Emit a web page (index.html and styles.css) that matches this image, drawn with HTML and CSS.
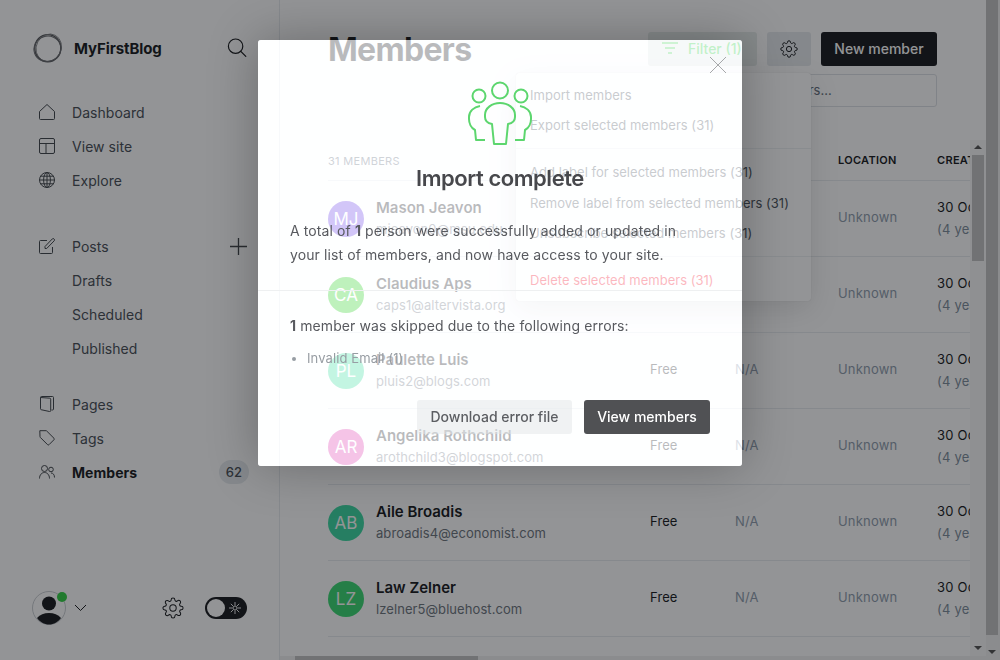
FILE: index.html
```html
<!DOCTYPE html>
<html lang="en">
<head>
    <meta charset="UTF-8">
    <meta name="viewport" content="width=device-width, initial-scale=1.0">
    <title>Members - MyFirstBlog</title>
    <link rel="stylesheet" href="styles.css">
</head>
<body>

    <div class="app">
        <!-- Sidebar -->
        <aside class="sidebar">
            <div class="brand">
                <svg class="logo" width="32" height="32" viewBox="0 0 32 32" fill="none">
                    <ellipse cx="15.800" cy="16.200" rx="13" ry="13.600" stroke="#505256" stroke-width="1.400"/>
                    <ellipse cx="16.500" cy="15.400" rx="12.400" ry="14" stroke="#76787b" stroke-width=".8" transform="rotate(28 16 16)"/>
                    <ellipse cx="15.200" cy="16.600" rx="13.600" ry="12.600" stroke="#66686c" stroke-width="1" transform="rotate(-20 16 16)"/>
                </svg>
                <span class="brand-name">MyFirstBlog</span>
                <svg class="brand-search" width="20" height="20" viewBox="0 0 20 20" fill="none" stroke="#15171a" stroke-width="1.200" stroke-linecap="round">
                    <circle cx="8.600" cy="8.200" r="7.200"/>
                    <path d="M13.800 13.400l5 5"/>
                </svg>
            </div>

            <nav class="nav">
                <a class="nav-item">
                    <svg class="nav-icon" viewBox="0 0 16 16"><path d="M.5 7.500L8 .5l7.500 7v7a1 1 0 0 1-1 1h-13a1 1 0 0 1-1-1z"/></svg>
                    Dashboard
                </a>
                <a class="nav-item">
                    <svg class="nav-icon" viewBox="0 0 16 16"><rect x=".5" y=".5" width="15" height="15" rx="1.500"/><path d="M.5 5.500h15M7 5.500v10"/></svg>
                    View site
                </a>
                <a class="nav-item">
                    <svg class="nav-icon" viewBox="0 0 16 16"><circle cx="8" cy="8" r="7.500"/><ellipse cx="8" cy="8" rx="3.400" ry="7.500"/><path d="M8 .5v15M.5 8h15M1.600 4.200h12.800M1.600 11.800h12.800"/></svg>
                    Explore
                </a>
            </nav>

            <nav class="nav nav-posts">
                <a class="nav-item">
                    <svg class="nav-icon" viewBox="0 0 16 16"><path d="M8 2.500H1.500a1 1 0 0 0-1 1v11a1 1 0 0 0 1 1h11a1 1 0 0 0 1-1V9"/><path d="M6 8.500L13.300.9a1.200 1.200 0 0 1 1.700 0l.2.2a1.200 1.200 0 0 1 0 1.700L7.700 10.500H6z"/></svg>
                    Posts
                    <svg class="nav-plus" width="17" height="17" viewBox="0 0 17 17" fill="none" stroke="#3f4346" stroke-width="1.300"><path d="M8.500 0v17M0 8.500h17"/></svg>
                </a>
                <a class="nav-item nav-sub">Drafts</a>
                <a class="nav-item nav-sub">Scheduled</a>
                <a class="nav-item nav-sub">Published</a>
            </nav>

            <nav class="nav">
                <a class="nav-item">
                    <svg class="nav-icon" viewBox="0 0 16 16"><path d="M1.500 1.500a1 1 0 0 1 1-1h11a1 1 0 0 1 1 1v11.500a1 1 0 0 1-1 1h-1"/><path d="M1.500 1.500v11.300a1 1 0 0 0 .6.9l8.400 1.800a1 1 0 0 0 1.200-1V3.200a1 1 0 0 0-.8-1z"/></svg>
                    Pages
                </a>
                <a class="nav-item">
                    <svg class="nav-icon" viewBox="0 0 16 16"><path d="M.8.7h6.200a1 1 0 0 1 .7.3l7.300 7.300a1 1 0 0 1 0 1.400l-5 5a1 1 0 0 1-1.400 0L1.300 7.400a1 1 0 0 1-.3-.7z"/></svg>
                    Tags
                </a>
                <a class="nav-item is-active">
                    <svg class="nav-icon" viewBox="0 0 16 16"><circle cx="5.500" cy="4.500" r="3"/><path d="M.5 14.500c0-3.500 2.200-6 5-6s5 2.500 5 6"/><circle cx="12" cy="5.500" r="2.300"/><path d="M12 9c2 0 3.500 1.600 3.500 4.500"/></svg>
                    Members
                    <span class="nav-badge">62</span>
                </a>
            </nav>

            <div class="sidebar-footer">
                <div class="user">
                    <svg class="user-avatar" width="34" height="34" viewBox="0 0 34 34">
                        <circle cx="17" cy="17" r="16.500" fill="none" stroke="#c8ccd0"/>
                        <circle cx="17" cy="12.500" r="7" fill="#15171a"/>
                        <path d="M5 27c3-3.500 7-5 12-5s9 1.500 12 5c-3 4-7 6.500-12 6.500S8 31 5 27z" fill="#15171a"/>
                    </svg>
                    <span class="user-dot"></span>
                </div>
                <svg class="user-caret" width="13" height="8" viewBox="0 0 13 8" fill="none" stroke="#15171a"><path d="M1 1l5.500 5.500L12 1"/></svg>
                <svg class="footer-gear" width="22" height="22" viewBox="0 0 24 24" fill="none" stroke="#15171a" stroke-width="1.100">
                    <circle cx="12" cy="12" r="3.500"/>
                    <path d="M19.400 15a1.650 1.650 0 0 0 .33 1.820l.06.06a2 2 0 0 1 0 2.830 2 2 0 0 1-2.830 0l-.06-.06a1.650 1.650 0 0 0-1.820-.33 1.650 1.650 0 0 0-1 1.510V21a2 2 0 0 1-2 2 2 2 0 0 1-2-2v-.09A1.650 1.650 0 0 0 9 19.400a1.650 1.650 0 0 0-1.820.33l-.06.06a2 2 0 0 1-2.830 0 2 2 0 0 1 0-2.830l.06-.06a1.650 1.650 0 0 0 .33-1.820 1.650 1.650 0 0 0-1.510-1H3a2 2 0 0 1-2-2 2 2 0 0 1 2-2h.09A1.650 1.650 0 0 0 4.600 9a1.650 1.650 0 0 0-.33-1.820l-.06-.06a2 2 0 0 1 0-2.830 2 2 0 0 1 2.830 0l.06.06a1.650 1.650 0 0 0 1.820.33H9a1.650 1.650 0 0 0 1-1.510V3a2 2 0 0 1 2-2 2 2 0 0 1 2 2v.09a1.650 1.650 0 0 0 1 1.510 1.650 1.650 0 0 0 1.820-.33l.06-.06a2 2 0 0 1 2.830 0 2 2 0 0 1 0 2.830l-.06.06a1.650 1.650 0 0 0-.33 1.820V9a1.650 1.650 0 0 0 1.510 1H21a2 2 0 0 1 2 2 2 2 0 0 1-2 2h-.09a1.650 1.650 0 0 0-1.510 1z"/>
                </svg>
                <div class="theme-toggle">
                    <span class="theme-knob"></span>
                    <svg width="12" height="12" viewBox="0 0 12 12" fill="none" stroke="#e8e8e8"><circle cx="6" cy="6" r="2"/><path d="M6 0v3.500M6 8.500V12M0 6h3.500M8.500 6H12M1.800 1.800l2.500 2.500M7.700 7.700l2.500 2.500M10.200 1.800L7.700 4.300M4.300 7.700l-2.500 2.500"/></svg>
                </div>
            </div>
        </aside>

        <!-- Members page -->
        <main class="main">
            <header class="topbar">
                <h1 class="page-title">Members</h1>
                <div class="actions">
                    <button class="btn btn-filter">
                        <svg width="16" height="12" viewBox="0 0 16 12" fill="none" stroke="#30cf43" stroke-width="1.500"><path d="M0 1h16M3 6h10M6 11h4"/></svg>
                        Filter (1)
                    </button>
                    <button class="btn btn-gear">
                        <svg width="18" height="18" viewBox="0 0 24 24" fill="none" stroke="#15171a" stroke-width="1.300">
                            <circle cx="12" cy="12" r="3.500"/>
                            <path d="M19.400 15a1.650 1.650 0 0 0 .33 1.820l.06.06a2 2 0 0 1 0 2.830 2 2 0 0 1-2.830 0l-.06-.06a1.650 1.650 0 0 0-1.820-.33 1.650 1.650 0 0 0-1 1.510V21a2 2 0 0 1-2 2 2 2 0 0 1-2-2v-.09A1.650 1.650 0 0 0 9 19.400a1.650 1.650 0 0 0-1.820.33l-.06.06a2 2 0 0 1-2.830 0 2 2 0 0 1 0-2.830l.06-.06a1.650 1.650 0 0 0 .33-1.820 1.650 1.650 0 0 0-1.510-1H3a2 2 0 0 1-2-2 2 2 0 0 1 2-2h.09A1.650 1.650 0 0 0 4.600 9a1.650 1.650 0 0 0-.33-1.820l-.06-.06a2 2 0 0 1 0-2.830 2 2 0 0 1 2.830 0l.06.06a1.650 1.650 0 0 0 1.820.33H9a1.650 1.650 0 0 0 1-1.510V3a2 2 0 0 1 2-2 2 2 0 0 1 2 2v.09a1.650 1.650 0 0 0 1 1.510 1.650 1.650 0 0 0 1.820-.33l.06-.06a2 2 0 0 1 2.830 0 2 2 0 0 1 0 2.830l-.06.06a1.650 1.650 0 0 0-.33 1.820V9a1.650 1.650 0 0 0 1.510 1H21a2 2 0 0 1 2 2 2 2 0 0 1-2 2h-.09a1.650 1.650 0 0 0-1.510 1z"/>
                        </svg>
                    </button>
                    <button class="btn btn-new">New member</button>
                </div>
            </header>

            <div class="search-row">
                <div class="search-box">Search members...</div>
            </div>

            <!-- Actions dropdown, open over the page -->
            <div class="menu">
                <a class="menu-item">Import members</a>
                <a class="menu-item">Export selected members (31)</a>
                <hr class="menu-line">
                <a class="menu-item menu-item-tall">Add label for selected members (31)</a>
                <a class="menu-item">Remove label from selected members (31)</a>
                <a class="menu-item">Unsubscribe selected members (31)</a>
                <hr class="menu-line">
                <a class="menu-item menu-danger">Delete selected members (31)</a>
            </div>

            <div class="table-area">
                <div class="table">
                    <div class="row row-head">
                        <span class="head-count">31 members</span>
                        <span></span>
                        <span></span>
                        <span class="head-strong">Location</span>
                        <span class="head-strong">Created</span>
                    </div>

                    <div class="row">
                        <div class="member">
                            <span class="avatar avatar-mj">MJ</span>
                            <div><div class="member-name">Mason Jeavon</div><div class="member-email">mjeavon0@msu.edu</div></div>
                        </div>
                        <span class="cell-plan">Free</span>
                        <span class="cell-muted">N/A</span>
                        <span class="cell-muted">Unknown</span>
                        <div class="cell-date">30 Oct 2018<br><span>(4 years ago)</span></div>
                    </div>
                    <div class="row">
                        <div class="member">
                            <span class="avatar avatar-ca">CA</span>
                            <div><div class="member-name">Claudius Aps</div><div class="member-email">caps1@altervista.org</div></div>
                        </div>
                        <span class="cell-plan">Free</span>
                        <span class="cell-muted">N/A</span>
                        <span class="cell-muted">Unknown</span>
                        <div class="cell-date">30 Oct 2018<br><span>(4 years ago)</span></div>
                    </div>
                    <div class="row">
                        <div class="member">
                            <span class="avatar avatar-pl">PL</span>
                            <div><div class="member-name">Paulette Luis</div><div class="member-email">pluis2@blogs.com</div></div>
                        </div>
                        <span class="cell-plan">Free</span>
                        <span class="cell-muted">N/A</span>
                        <span class="cell-muted">Unknown</span>
                        <div class="cell-date">30 Oct 2018<br><span>(4 years ago)</span></div>
                    </div>
                    <div class="row">
                        <div class="member">
                            <span class="avatar avatar-ar">AR</span>
                            <div><div class="member-name">Angelika Rothchild</div><div class="member-email">arothchild3@blogspot.com</div></div>
                        </div>
                        <span class="cell-plan">Free</span>
                        <span class="cell-muted">N/A</span>
                        <span class="cell-muted">Unknown</span>
                        <div class="cell-date">30 Oct 2018<br><span>(4 years ago)</span></div>
                    </div>
                    <div class="row">
                        <div class="member">
                            <span class="avatar avatar-ab">AB</span>
                            <div><div class="member-name">Aile Broadis</div><div class="member-email">abroadis4@economist.com</div></div>
                        </div>
                        <span class="cell-plan">Free</span>
                        <span class="cell-muted">N/A</span>
                        <span class="cell-muted">Unknown</span>
                        <div class="cell-date">30 Oct 2018<br><span>(4 years ago)</span></div>
                    </div>
                    <div class="row">
                        <div class="member">
                            <span class="avatar avatar-lz">LZ</span>
                            <div><div class="member-name">Law Zelner</div><div class="member-email">lzelner5@bluehost.com</div></div>
                        </div>
                        <span class="cell-plan">Free</span>
                        <span class="cell-muted">N/A</span>
                        <span class="cell-muted">Unknown</span>
                        <div class="cell-date">30 Oct 2018<br><span>(4 years ago)</span></div>
                    </div>
                </div>

                <div class="vbar">
                    <span class="arrow-up"></span>
                    <span class="vbar-thumb"></span>
                    <span class="arrow-down"></span>
                </div>
            </div>

            <div class="hbar"><span class="hbar-thumb"></span></div>
        </main>

        <div class="page-bar">
            <span class="page-bar-thumb"></span>
            <span class="arrow-down"></span>
        </div>
    </div>

    <!-- Import modal -->
    <div class="backdrop"></div>
    <div class="modal">
        <svg class="modal-close" width="16" height="16" viewBox="0 0 16 16" fill="none" stroke="#a6a8aa"><path d="M0 0l16 16M16 0L0 16"/></svg>

        <svg class="modal-icon" width="64" height="64" viewBox="0 0 64 64" fill="none" stroke="#5cd66e" stroke-width="2" stroke-linejoin="round">
            <circle cx="32" cy="9.500" r="8"/>
            <circle cx="11" cy="15" r="6.500"/>
            <circle cx="53" cy="15" r="6.500"/>
            <path d="M26 63L24 43C19 42 17 39 17 36V34C17 27 24 22 32 22S47 27 47 34V36C47 39 45 42 40 43L38 63Z"/>
            <path d="M12 25C6 26 1 30 1 36V38C1 42 3 47 7 49L8 59H17"/>
            <path d="M52 25C58 26 63 30 63 36V38C63 42 61 47 57 49L56 59H47"/>
        </svg>
        <h2 class="modal-title">Import complete</h2>
        <p class="modal-text">A total of <b>1</b> person were successfully added or updated in your list of members, and now have access to your site.</p>
        <hr class="modal-line">
        <p class="modal-errors"><b>1</b> member was skipped due to the following errors:</p>
        <ul class="modal-list">
            <li>Invalid Email (1)</li>
        </ul>
        <div class="modal-actions">
            <button class="btn btn-download">Download error file</button>
            <button class="btn btn-view">View members</button>
        </div>
    </div>

</body>
</html>
```

FILE: styles.css
```css
* {
    box-sizing: border-box;
}

html, body {
    margin: 0;
    padding: 0;
    height: 660px;
    overflow: hidden;
}

body {
    font-family: Inter, 'Noto Sans', sans-serif;
    font-size: 14px;
    color: #15171a;
    background-color: #fff;
}

.app {
    display: flex;
    height: 660px;
}

/* Sidebar */
.sidebar {
    width: 280px;
    flex: none;
    padding: 32px 32px 0;
    border-right: 1px solid #e8ecef;
    display: flex;
    flex-direction: column;
}

.brand {
    display: flex;
    align-items: center;
    height: 32px;
    margin-bottom: 31px;
}

.brand-name {
    margin-left: 10px;
    font-size: 15px;
    font-weight: 700;
    letter-spacing: -0.1px;
}

.brand-search {
    margin-left: auto;
    margin-right: 0;
}

.nav {
    display: flex;
    flex-direction: column;
    margin-bottom: 22px;
}

.nav:first-of-type {
    margin-bottom: 32px;
}

.nav-item {
    display: flex;
    align-items: center;
    height: 34px;
    padding-left: 7px;
    color: #454c53;
    font-size: 14px;
    letter-spacing: 0.05px;
}

.nav-icon {
    width: 16px;
    height: 16px;
    margin-right: 17px;
    fill: none;
    stroke: #3f4449;
    stroke-width: 1;
    stroke-linejoin: round;
}

.nav-sub {
    padding-left: 40px;
}

.nav-plus {
    margin-left: auto;
}

.is-active {
    color: #15171a;
    font-weight: 700;
}

.nav-badge {
    margin-left: auto;
    margin-right: -2px;
    width: 30px;
    height: 24px;
    line-height: 24px;
    border-radius: 12px;
    text-align: center;
    font-size: 13px;
    font-weight: 500;
    color: #454c53;
    background-color: #e5eaed;
}

.sidebar-footer {
    display: flex;
    align-items: center;
    margin-top: auto;
    margin-bottom: 35px;
}

.user {
    position: relative;
    width: 34px;
    height: 34px;
}

.user-avatar {
    display: block;
}

.user-dot {
    position: absolute;
    top: 1px;
    right: -1px;
    width: 10px;
    height: 10px;
    border-radius: 50%;
    background-color: #30cf43;
}

.user-caret {
    margin-left: 8px;
}

.footer-gear {
    margin-left: 75px;
}

.theme-toggle {
    display: flex;
    align-items: center;
    justify-content: space-between;
    width: 42px;
    height: 22px;
    margin-left: 21px;
    padding: 0 6px 0 2px;
    border-radius: 11px;
    background-color: #15171a;
}

.theme-knob {
    width: 18px;
    height: 18px;
    border-radius: 50%;
    background-color: #fff;
}

/* Main */
.main {
    position: relative;
    flex: 1;
    min-width: 0;
    padding: 32px 0 0 48px;
}

.topbar {
    display: flex;
    align-items: center;
    justify-content: space-between;
    height: 34px;
    padding-right: 49px;
}

.page-title {
    margin: 0;
    font-size: 32px;
    font-weight: 700;
    letter-spacing: -0.7px;
}

.actions {
    display: flex;
    gap: 10px;
}

.btn {
    height: 34px;
    padding-bottom: 2px;
    border: none;
    border-radius: 3px;
    font-family: inherit;
    font-size: 14px;
    font-weight: 450;
    cursor: pointer;
}

.btn-filter {
    display: flex;
    align-items: center;
    gap: 10px;
    width: 109px;
    padding: 0 14px 2px;
    color: #30cf43;
    background-color: #e6ecea;
}

.btn-gear {
    width: 44px;
    padding: 0;
    background-color: #e6eaed;
}

.btn-gear svg {
    display: block;
    margin: 0 auto;
}

.btn-new {
    width: 116px;
    padding: 0 0 2px;
    color: #fff;
    background-color: #15171a;
}

.search-row {
    display: flex;
    justify-content: flex-end;
    margin-top: 8px;
    padding-right: 49px;
}

.search-box {
    width: 237px;
    height: 33px;
    padding-left: 15px;
    line-height: 31px;
    font-size: 13px;
    color: #626d79;
    border: 1px solid #dde1e5;
    border-radius: 3px;
}

.menu {
    position: absolute;
    top: 73px;
    left: 236px;
    width: 295px;
    height: 228px;
    padding-top: 7px;
    background-color: #fff;
    border-radius: 3px;
    box-shadow: 0 0 1px rgba(0, 0, 0, 0.2), 0 8px 30px rgba(0, 0, 0, 0.12);
}

.menu-item {
    display: block;
    height: 30px;
    line-height: 30px;
    padding-left: 14px;
    font-size: 13px;
    letter-spacing: 0.02px;
    color: #4a5259;
    white-space: nowrap;
}

.menu-item-tall {
    height: 31px;
}

.menu-danger {
    color: #f50b23;
}

.menu-line {
    height: 1px;
    margin: 8px 0 8px;
    border: none;
    background-color: #edf0f2;
}

.table-area {
    display: flex;
    height: 516px;
    margin-top: 33px;
}

.table {
    width: 642px;
    overflow: hidden;
}

.row {
    display: grid;
    grid-template-columns: 322px 85px 103px 99px 140px;
    align-items: center;
    height: 76px;
    border-bottom: 1px solid #e8ecef;
    font-size: 13px;
    white-space: nowrap;
}

.row-head {
    height: 41px;
    font-size: 11px;
    letter-spacing: 0.3px;
    text-transform: uppercase;
}

.head-count {
    padding-top: 1px;
    color: #626d79;
}

.head-strong {
    font-weight: 600;
    color: #15171a;
}

.member {
    display: flex;
    align-items: center;
    gap: 12px;
}

.avatar {
    width: 36px;
    height: 36px;
    line-height: 36px;
    border-radius: 50%;
    text-align: center;
    font-size: 17px;
    color: #fff;
}

.avatar-mj { background-color: #6a3fe6; }
.avatar-ca { background-color: #25d01b; }
.avatar-pl { background-color: #38de99; }
.avatar-ar { background-color: #de38ab; }
.avatar-ab { background-color: #3ad8a0; }
.avatar-lz { background-color: #38d870; }

.member-name {
    font-size: 15px;
    font-weight: 600;
    line-height: 22px;
}

.member-email {
    margin-top: -1px;
    font-size: 13px;
    line-height: 22px;
    letter-spacing: 0.07px;
    color: #6b737b;
}

.cell-plan {
    padding-bottom: 3px;
    letter-spacing: 0.1px;
}

.cell-muted {
    padding-bottom: 3px;
    letter-spacing: 0.2px;
    color: #8e9cac;
}

.cell-date {
    padding-bottom: 1px;
    line-height: 22px;
    letter-spacing: 0.2px;
}

.cell-date span {
    color: #7c8b9a;
}

/* Scrollbars */
.vbar {
    position: relative;
    width: 16px;
    height: 516px;
    background-color: #f7f7f7;
}

.vbar-thumb {
    display: block;
    width: 12px;
    height: 106px;
    margin: 15px 0 0 2px;
    background-color: #c1c1c1;
}

.arrow-up, .arrow-down {
    position: absolute;
    left: 4px;
    width: 0;
    height: 0;
    border-left: 4px solid transparent;
    border-right: 4px solid transparent;
}

.arrow-up {
    top: 5px;
    border-bottom: 4px solid #505050;
}

.arrow-down {
    bottom: 6px;
    border-top: 4px solid #505050;
}

.hbar {
    height: 4px;
    margin-left: -48px;
    padding-left: 15px;
    background-color: #f1f1f1;
}

.hbar-thumb {
    display: block;
    width: 183px;
    height: 4px;
    background-color: #c1c1c1;
}

.page-bar {
    position: relative;
    width: 14px;
    flex: none;
    background-color: #f1f1f1;
}

.page-bar-thumb {
    display: block;
    width: 12px;
    height: 635px;
    background-color: #c1c1c1;
}

.page-bar .arrow-down {
    left: 2px;
}

/* Dimmed layer and modal */
.backdrop {
    position: fixed;
    inset: 0;
    background-color: rgba(15, 18, 22, 0.45);
}

.modal {
    position: fixed;
    top: 40px;
    left: 258px;
    width: 484px;
    height: 426px;
    padding: 41px 32px 32px;
    border-radius: 3px;
    background-color: rgba(255, 255, 255, 0.69);
    -webkit-backdrop-filter: brightness(1.71);
    backdrop-filter: brightness(1.71);
    box-shadow: 0 0 50px rgba(0, 0, 0, 0.28);
    color: #585a5f;
}

.modal-close {
    position: absolute;
    top: 17px;
    right: 16px;
}

.modal-icon {
    display: block;
    margin: 0 auto;
}

.modal-title {
    margin: 18px 0 0;
    height: 30px;
    line-height: 30px;
    text-align: center;
    font-size: 22px;
    font-weight: 600;
    letter-spacing: -0.45px;
    color: #47484c;
}

.modal-text, .modal-errors {
    margin: 26px 0 0;
    font-size: 14px;
    letter-spacing: 0.1px;
    line-height: 24px;
}

.modal-text {
    padding-right: 10px;
}

.modal-line {
    height: 1px;
    margin: 23px -32px 0;
    border: none;
    background-color: #eef0f1;
}

.modal-errors {
    margin-top: 23px;
}

.modal-list {
    margin: 10px 0 0;
    padding: 0 0 0 17px;
    font-size: 13px;
    letter-spacing: 0.1px;
    line-height: 20px;
    color: #979da3;
}

.modal-actions {
    display: flex;
    justify-content: flex-end;
    gap: 12px;
    margin-top: 32px;
}

.btn-download {
    width: 155px;
    color: #5c5e62;
    background-color: rgba(225, 230, 232, 0.5);
}

.btn-view {
    width: 126px;
    color: #fff;
    background-color: #505154;
}
```
